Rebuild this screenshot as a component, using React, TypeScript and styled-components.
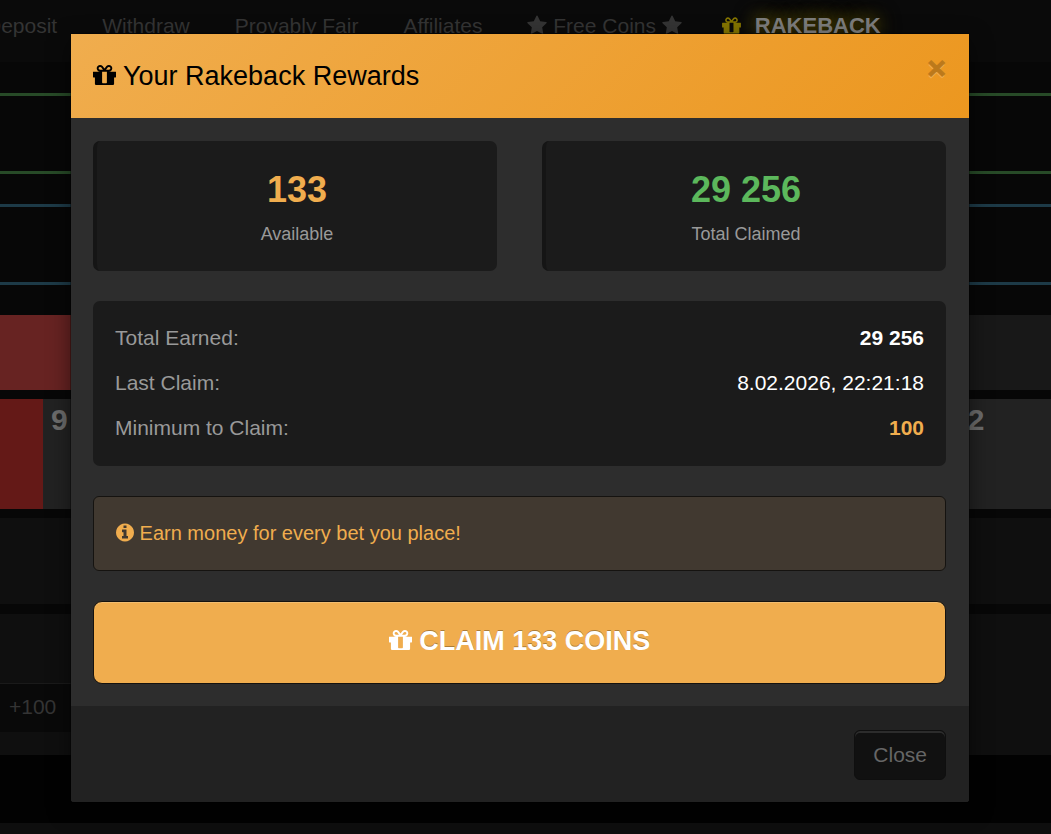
import React from 'react';
import styled, { createGlobalStyle, css } from 'styled-components';

const GlobalStyle = createGlobalStyle`
  *, *::before, *::after { box-sizing: border-box; }
  html, body { margin: 0; background: #070707; }
  body {
    color: #c8c8c8;
    font-family: "Liberation Sans", Arial, Helvetica, sans-serif;
    font-size: 21px;
    line-height: 30px;
  }
  h2, dl, dd, p { margin: 0; }
  button { font-family: inherit; cursor: pointer; }
`;

/* ---------- icons ---------- */

const glyphs = {
  gift: {
    width: 1536,
    path: 'M928 180v56v468v192h-320v-192v-468v-56q0 -25 18 -38.5t46 -13.5h192q28 0 46 13.5t18 38.5zM472 1024h195l-126 161q-26 31 -69 31q-40 0 -68 -28t-28 -68t28 -68t68 -28zM1160 1120q0 40 -28 68t-68 28q-43 0 -69 -31l-125 -161h194q40 0 68 28t28 68zM1536 864v-320q0 -14 -9 -23t-23 -9h-96v-416q0 -40 -28 -68t-68 -28h-1088q-40 0 -68 28t-28 68v416h-96q-14 0 -23 9t-9 23v320q0 14 9 23t23 9h440q-93 0 -158.5 65.5t-65.5 158.5t65.5 158.5t158.5 65.5q107 0 168 -77l128 -165l128 165q61 77 168 77q93 0 158.5 -65.5t65.5 -158.5t-65.5 -158.5t-158.5 -65.5h440q14 0 23 -9t9 -23z',
  },
  info: {
    width: 1536,
    path: 'M1024 160v160q0 14 -9 23t-23 9h-96v512q0 14 -9 23t-23 9h-320q-14 0 -23 -9t-9 -23v-160q0 -14 9 -23t23 -9h96v-320h-96q-14 0 -23 -9t-9 -23v-160q0 -14 9 -23t23 -9h448q14 0 23 9t9 23zM896 1056v160q0 14 -9 23t-23 9h-192q-14 0 -23 -9t-9 -23v-160q0 -14 9 -23t23 -9h192q14 0 23 9t9 23zM1536 640q0 -209 -103 -385.5t-279.5 -279.5t-385.5 -103t-385.5 103t-279.5 279.5t-103 385.5t103 385.5t279.5 279.5t385.5 103t385.5 -103t279.5 -279.5t103 -385.5z',
  },
  star: {
    width: 1664,
    path: 'M1664 889q0 -22 -26 -48l-363 -354l86 -500q1 -7 1 -20q0 -21 -10.5 -35.5t-30.5 -14.5q-19 0 -40 12l-449 236l-449 -236q-22 -12 -40 -12q-21 0 -31.5 14.5t-10.5 35.5q0 6 2 20l86 500l-364 354q-25 27 -25 48q0 37 56 46l502 73l225 455q19 41 49 41t49 -41l225 -455l502 -73q56 -9 56 -46z',
  },
};

const Svg = styled.svg<{ $drop: number }>`
  display: inline-block;
  fill: currentColor;
  vertical-align: -${(p) => p.$drop}px;
`;

function Icon({ name, size }: { name: keyof typeof glyphs; size: number }) {
  const { width, path } = glyphs[name];
  return (
    <Svg
      $drop={Math.round(size / 7)}
      width={Math.round((size * width) / 1792)}
      height={size}
      viewBox={`0 0 ${width} 1792`}
      aria-hidden="true"
    >
      <path transform="translate(0 1536) scale(1 -1)" d={path} />
    </Svg>
  );
}

/* ---------- page behind the dialog ---------- */

const Page = styled.div`
  position: relative;
  min-height: 100vh;
  overflow: hidden;
  display: flex;
  flex-direction: column;
`;

const Nav = styled.nav`
  display: flex;
  gap: 45px;
  height: 62px;
  margin-left: -14px;
  padding-top: 11px;
  background: #0a0a0a;
  white-space: nowrap;
`;

const NavLink = styled.a<{ $featured?: boolean }>`
  color: #343434;
  text-decoration: none;
  ${(p) =>
    p.$featured &&
    css`
      display: flex;
      gap: 14px;
      align-items: center;
      height: 30px;
      margin-left: -5px;
      color: #7c7c7c;
      font-size: 22px;
      font-weight: bold;
      text-shadow: 0 0 15px #5c5000, 0 0 22px #4a4000;
      svg {
        color: #857500;
      }
    `}
`;

const Notices = styled.div`
  display: flex;
  flex-direction: column;
  gap: 30px;
  padding: 31px 0 30px;
`;

const Notice = styled.div<{ $line: string }>`
  height: 81px;
  border: solid ${(p) => p.$line};
  border-width: 3px 0;
`;

const Bets = styled.div`
  display: grid;
  grid-template-columns: 1fr 1fr;
  height: 75px;
`;

const Bet = styled.div<{ $color: string }>`
  background: ${(p) => p.$color};
`;

const Wheel = styled.div`
  display: flex;
  height: 110px;
  margin: 9px 0;
  overflow: hidden;
`;

const Slot = styled.div<{ $color: string; $width?: number }>`
  flex: ${(p) => (p.$width ? `0 0 ${p.$width}px` : '1 0 0')};
  padding: 4px 8px;
  background: ${(p) => p.$color};
  color: #6c6c6c;
  font-size: 30px;
  font-weight: bold;
  line-height: 34px;
`;

const Block = styled.div<{ $height: number }>`
  height: ${(p) => p.$height}px;
  margin-bottom: 10px;
  background: #0f0f0f;
`;

const BetForm = styled.div`
  display: grid;
  grid-template-columns: 1fr 1fr;
  align-items: start;
  height: 141px;
  padding-top: 69px;
  background: #0f0f0f;
`;

const Chip = styled.button`
  height: 49px;
  padding: 0 9px 2px;
  border: 0;
  border-top: 1px solid #1a1a1a;
  background: #090909;
  color: #343434;
  font-size: 21px;
  line-height: 30px;
  text-align: left;
`;

const Bottom = styled.footer`
  flex: 1;
  padding-top: 68px;
  background: #020202;
  &::after {
    content: '';
    display: block;
    height: 11px;
    background: #0e0e0e;
  }
`;

/* ---------- dialog ---------- */

const Overlay = styled.div`
  position: absolute;
  inset: 0;
  padding: 34px 82px 32px 71px;
`;

const Dialog = styled.section`
  border-radius: 0 0 3px 3px;
  background: #2d2d2d;
  box-shadow: 0 0 0 1px rgba(0, 0, 0, 0.3), 0 7px 22px rgba(0, 0, 0, 0.5);
`;

const Header = styled.header`
  display: flex;
  justify-content: space-between;
  align-items: flex-start;
  padding: 22px 23px 22px 22px;
  background: linear-gradient(135deg, #f0ad4e, #ec971f);
`;

const Title = styled.h2`
  color: #000;
  font-size: 27px;
  font-weight: normal;
  line-height: 40px;
`;

const Dismiss = styled.button`
  margin-top: -3px;
  padding: 0;
  border: 0;
  background: none;
  color: #000;
  font-size: 32px;
  font-weight: bold;
  line-height: 31px;
  opacity: 0.2;
  text-shadow: 0 2px 0 #fff;
  -webkit-text-stroke: 1px #000;
`;

const Body = styled.div`
  display: flex;
  flex-direction: column;
  gap: 30px;
  padding: 23px 23px 22px 22px;
`;

const Stats = styled.div`
  display: grid;
  grid-template-columns: 1fr 1fr;
  gap: 45px;
`;

const Stat = styled.div`
  padding: 23px 22px 24px;
  border-left: 4px solid #151515;
  border-radius: 7px;
  background: #1b1b1b;
  text-align: center;
`;

const StatValue = styled.div<{ $color: string }>`
  margin-bottom: 5px;
  color: ${(p) => p.$color};
  font-size: 36px;
  font-weight: bold;
  line-height: 52px;
`;

const StatLabel = styled.div`
  color: #999;
  font-size: 18px;
  line-height: 26px;
`;

const Details = styled.dl`
  display: flex;
  flex-direction: column;
  gap: 15px;
  padding: 22px 22px 23px;
  border-radius: 7px;
  background: #1b1b1b;
`;

const Detail = styled.div`
  display: flex;
  justify-content: space-between;
  color: #999;
`;

const DetailValue = styled.dd<{ $color?: string; $bold?: boolean }>`
  color: ${(p) => p.$color ?? '#fff'};
  font-weight: ${(p) => (p.$bold ? 'bold' : 'normal')};
`;

const Hint = styled.p`
  padding: 21px 22px 22px;
  border: 1px solid #151310;
  border-radius: 6px;
  background: #413930;
  color: #f0ad4e;
  font-size: 20px;
`;

const Claim = styled.button`
  height: 83px;
  padding: 0 24px 4px;
  border: 1px solid #15120e;
  border-radius: 9px;
  background: #f0ad4e;
  box-shadow: inset 0 1px 0 #f2bd70;
  color: #fff;
  font-size: 27px;
  font-weight: bold;
  line-height: 36px;
  text-shadow: 0 -1px 0 rgba(0, 0, 0, 0.3);
`;

const Footer = styled.footer`
  display: flex;
  justify-content: flex-end;
  padding: 24px 23px 22px;
  border-radius: 0 0 3px 3px;
  background: #222;
`;

const CloseButton = styled.button`
  height: 50px;
  padding: 0 18px;
  border: 1px solid #0f0f0f;
  border-radius: 6px;
  background: #111;
  box-shadow: inset 0 2px 0 #2c2c2c;
  color: #666;
  font-size: 21px;
  line-height: 30px;
`;

export default function App() {
  return (
    <Page>
      <GlobalStyle />
      <Nav>
        <NavLink href="#deposit">Deposit</NavLink>
        <NavLink href="#withdraw">Withdraw</NavLink>
        <NavLink href="#fair">Provably Fair</NavLink>
        <NavLink href="#affiliates">Affiliates</NavLink>
        <NavLink href="#free">
          <Icon name="star" size={21} /> Free Coins <Icon name="star" size={21} />
        </NavLink>
        <NavLink href="#rakeback" $featured>
          <Icon name="gift" size={22} /> RAKEBACK
        </NavLink>
      </Nav>
      <Notices>
        <Notice $line="#274a27" />
        <Notice $line="#1d3a47" />
      </Notices>
      <Bets>
        <Bet $color="#672322" />
        <Bet $color="#181818" />
      </Bets>
      <Wheel>
        <Slot $color="#641917" $width={43} />
        <Slot $color="#222">9</Slot>
        <Slot $color="#222" $width={108}>12</Slot>
      </Wheel>
      <Block $height={86} />
      <BetForm>
        <Chip type="button">+100</Chip>
      </BetForm>
      <Bottom />

      <Overlay>
        <Dialog role="dialog" aria-modal="true" aria-labelledby="rakeback-title">
          <Header>
            <Title id="rakeback-title">
              <Icon name="gift" size={27} /> Your Rakeback Rewards
            </Title>
            <Dismiss type="button" aria-label="Close dialog">×</Dismiss>
          </Header>
          <Body>
            <Stats>
              <Stat>
                <StatValue $color="#f0ad4e">133</StatValue>
                <StatLabel>Available</StatLabel>
              </Stat>
              <Stat>
                <StatValue $color="#5cb85c">29 256</StatValue>
                <StatLabel>Total Claimed</StatLabel>
              </Stat>
            </Stats>
            <Details>
              <Detail>
                <dt>Total Earned:</dt>
                <DetailValue $bold>29 256</DetailValue>
              </Detail>
              <Detail>
                <dt>Last Claim:</dt>
                <DetailValue>8.02.2026, 22:21:18</DetailValue>
              </Detail>
              <Detail>
                <dt>Minimum to Claim:</dt>
                <DetailValue $bold $color="#f0ad4e">100</DetailValue>
              </Detail>
            </Details>
            <Hint>
              <Icon name="info" size={21} /> Earn money for every bet you place!
            </Hint>
            <Claim type="button">
              <Icon name="gift" size={27} /> CLAIM 133 COINS
            </Claim>
          </Body>
          <Footer>
            <CloseButton type="button">Close</CloseButton>
          </Footer>
        </Dialog>
      </Overlay>
    </Page>
  );
}
